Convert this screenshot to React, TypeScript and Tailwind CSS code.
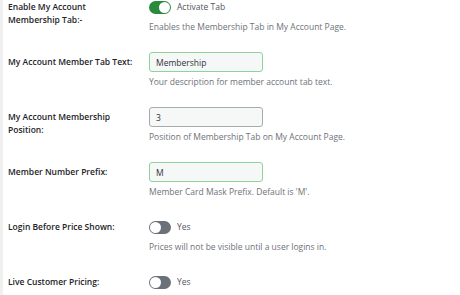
import { useState } from "react";

type Row =
  | { kind: "toggle"; label: string[]; text: string; on: boolean; desc?: string }
  | { kind: "input"; label: string[]; value: string; focus: boolean; desc?: string };

const rows: Row[] = [
  { kind: "toggle", label: ["Enable My Account", "Membership Tab:-"], text: "Activate Tab", on: true, desc: "Enables the Membership Tab in My Account Page." },
  { kind: "input", label: ["My Account Member Tab Text:"], value: "Membership", focus: true, desc: "Your description for member account tab text." },
  { kind: "input", label: ["My Account Membership", "Position:"], value: "3", focus: false, desc: "Position of Membership Tab on My Account Page." },
  { kind: "input", label: ["Member Number Prefix:"], value: "M", focus: true, desc: "Member Card Mask Prefix. Default is 'M'." },
  { kind: "toggle", label: ["Login Before Price Shown:"], text: "Yes", on: false, desc: "Prices will not be visible until a user logins in." },
  { kind: "toggle", label: ["Live Customer Pricing:"], text: "Yes", on: false },
];

function Toggle({ on, text }: { on: boolean; text: string }) {
  const [checked, setChecked] = useState(on);
  return (
    <button onClick={() => setChecked(!checked)} className="flex items-center gap-[6px] h-5">
      <span
        className={`relative w-[22px] h-[13px] rounded-full ${checked ? "bg-[#2a8a3c]" : "bg-[#6b7178]"}`}
      >
        <span
          className={`absolute top-[1px] w-[11px] h-[11px] rounded-full bg-white ${checked ? "right-[1px]" : "left-[1px]"}`}
        />
      </span>
      <span className="text-[8.5px] text-[#50575e]">{text}</span>
    </button>
  );
}

export default function App() {
  return (
    <div className="flex w-[460px] h-[295px] overflow-hidden bg-white" style={{ fontFamily: '"Open Sans", "Noto Sans", sans-serif' }}>
      <div className="w-[3px] bg-[#f0f0f1]" />
      <div className="flex flex-col gap-[18px] pl-[5px] mt-[-3px]">
        {rows.map((row, i) => (
          <div key={i} className="grid grid-cols-[141px_1fr]">
            <div className="pt-[3px] text-[8.5px] leading-[13px] font-semibold text-[#1d2327]">
              {row.label.map((l) => (
                <div key={l}>{l}</div>
              ))}
            </div>
            <div className="flex flex-col">
              {row.kind === "toggle" ? (
                <Toggle on={row.on} text={row.text} />
              ) : (
                <input
                  defaultValue={row.value}
                  className={`w-[114px] h-5 px-[6px] rounded-[3px] border bg-[#f6f7f7] text-[8.5px] text-[#2c3338] outline-none ${row.focus ? "border-[#8fd39c]" : "border-[#a7aaad]"}`}
                />
              )}
              {row.desc && (
                <p className="mt-[3px] text-[8.5px] leading-[14px] text-[#6d7278]">{row.desc}</p>
              )}
            </div>
          </div>
        ))}
      </div>
    </div>
  );
}
